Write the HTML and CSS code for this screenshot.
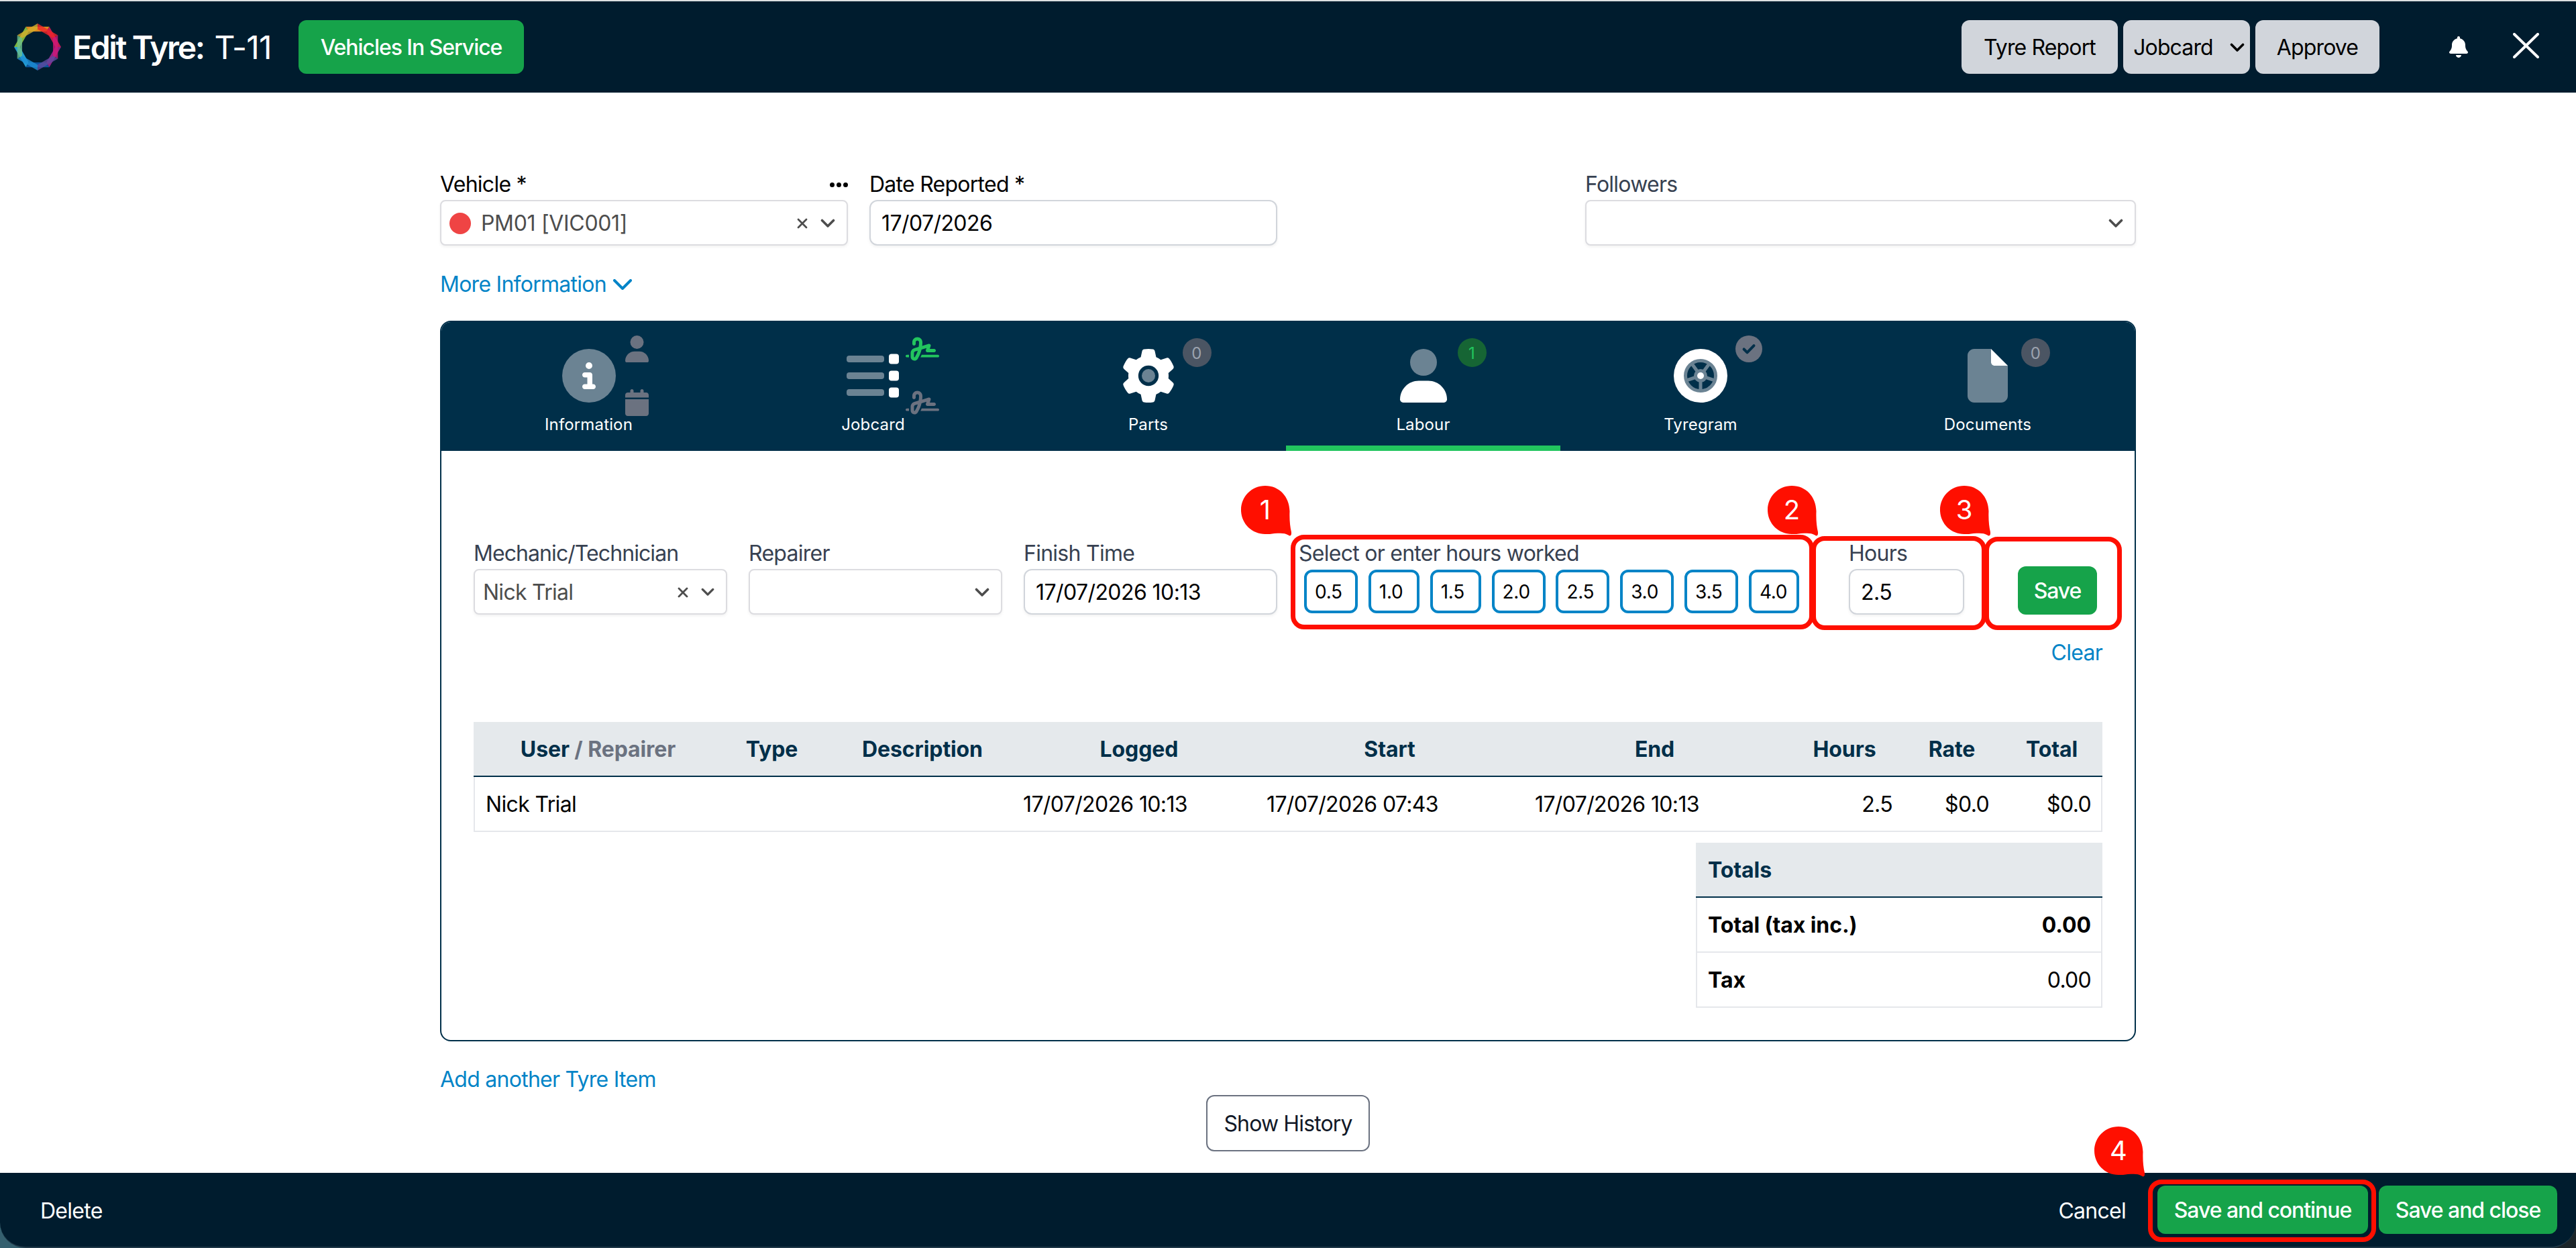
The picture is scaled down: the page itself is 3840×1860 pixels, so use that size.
FILE: index.html
```
<!DOCTYPE html>
<html lang="en">
<head>
    <meta charset="utf-8">
    <title>Edit Tyre: T-11</title>
    <link rel="stylesheet" href="styles.css">
</head>
<body>
    <!-- shared icons -->
    <svg class="defs" width="0" height="0">
        <symbol id="chevron" viewBox="0 0 22 14"><path d="M2.500 2.500l8.500 8.500l8.500-8.500" fill="none" stroke="currentColor" stroke-width="3.600" stroke-linecap="round" stroke-linejoin="round"/></symbol>
        <symbol id="cross" viewBox="0 0 16 16"><path d="M2 2l12 12M14 2L2 14" fill="none" stroke="currentColor" stroke-width="2.800" stroke-linecap="round"/></symbol>
        <symbol id="user" viewBox="0 0 448 512"><path class="head" d="M224 256A128 128 0 1 0 224 0a128 128 0 1 0 0 256z"/><path d="M178.300 304C79.800 304 0 383.800 0 482.300C0 498.700 13.300 512 29.700 512l388.600 0c16.400 0 29.700-13.300 29.700-29.700C448 383.800 368.200 304 269.700 304l-91.400 0z"/></symbol>
        <symbol id="signature" viewBox="0 0 640 512"><path d="M192 128c0-17.700 14.300-32 32-32s32 14.300 32 32l0 7.800c0 27.700-2.400 55.300-7.100 82.500l-84.400 25.300c-40.600 12.200-68.400 49.600-68.400 92l0 71.900c0 40 32.500 72.500 72.500 72.500c26 0 50-13.900 62.900-36.500l13.900-24.300c26.800-47 46.500-97.700 58.400-150.500l94.400-28.300-12.500 37.500c-3.300 9.800-1.600 20.500 4.400 28.800s15.700 13.300 26 13.300l128 0c17.700 0 32-14.300 32-32s-14.300-32-32-32l-83.600 0 18-53.900c3.800-11.300 .9-23.800-7.400-32.400s-20.700-11.800-32.200-8.400L316.400 198.100c2.400-20.700 3.600-41.400 3.600-62.300l0-7.800c0-53-43-96-96-96s-96 43-96 96l0 32c0 17.700 14.300 32 32 32s32-14.300 32-32l0-32zm-9.200 177l49-14.700c-10.400 33.800-24.500 66.400-42.100 97.200l-13.900 24.300c-1.500 2.600-4.300 4.300-7.400 4.300c-4.700 0-8.500-3.800-8.500-8.500l0-71.900c0-14.100 9.300-26.600 22.800-30.700zM24 368c-13.300 0-24 10.700-24 24s10.700 24 24 24l40.300 0c-.2-2.800-.3-5.600-.3-8.500l0-39.500-40 0zm592 48c13.300 0 24-10.700 24-24s-10.700-24-24-24l-310.100 0c-6.700 16.300-14.200 32.300-22.300 48L616 416z"/></symbol>
        <symbol id="bubble" viewBox="0 0 75 75"><path d="M36 0C57 0 72 16 72.500 38C72 50 73 61 75 69C75.500 73 74 76 70.500 73.500C65 70 59 70.500 50 71C45 72 41 72 36 72C16 72 0 56 0 36S16 0 36 0Z"/></symbol>
    </svg>

    <header class="topbar">
        <svg class="logo" viewBox="-35 -35 70 70">
            <g opacity=".9">
                <path d="M-17.500-30.300h35l-4.200 7.300h-26.600z" fill="#f7941d"/>
                <path d="M-17.500-30.300h35l-4.200 7.300h-26.600z" fill="#8cc63f" transform="rotate(-60)"/>
                <path d="M-17.500-30.300h35l-4.200 7.300h-26.600z" fill="#29abe2" transform="rotate(-120)"/>
                <path d="M-17.500-30.300h35l-4.200 7.300h-26.600z" fill="#0d5bab" transform="rotate(180)"/>
                <path d="M-17.500-30.300h35l-4.200 7.300h-26.600z" fill="#a3238e" transform="rotate(120)"/>
                <path d="M-17.500-30.300h35l-4.200 7.300h-26.600z" fill="#d81b54" transform="rotate(60)"/>
            </g>
            <g opacity=".8">
                <path d="M-17.500-30.300h35l-4.200 7.300h-26.600z" fill="#f0262a" transform="rotate(30)"/>
                <path d="M-17.500-30.300h35l-4.200 7.300h-26.600z" fill="#d01878" transform="rotate(90)"/>
                <path d="M-17.500-30.300h35l-4.200 7.300h-26.600z" fill="#5f4ba0" transform="rotate(150)"/>
                <path d="M-17.500-30.300h35l-4.200 7.300h-26.600z" fill="#1e8fd5" transform="rotate(210)"/>
                <path d="M-17.500-30.300h35l-4.200 7.300h-26.600z" fill="#6cc08c" transform="rotate(270)"/>
                <path d="M-17.500-30.300h35l-4.200 7.300h-26.600z" fill="#d4ae2c" transform="rotate(330)"/>
            </g>
        </svg>
        <h1 class="title">Edit Tyre: <span>T-11</span></h1>
        <button class="btn btn-green btn-service">Vehicles In Service</button>
        <div class="topbar-actions">
            <button class="btn btn-grey btn-report">Tyre Report</button>
            <button class="btn btn-grey btn-jobcard">Jobcard <svg width="22" height="14"><use href="#chevron"/></svg></button>
            <button class="btn btn-grey btn-approve">Approve</button>
        </div>
        <svg class="bell" viewBox="0 0 448 512"><path d="M224 0c-17.700 0-32 14.300-32 32l0 19.200C119 66 64 130.600 64 208l0 18.800c0 47-17.300 92.400-48.500 127.600l-7.400 8.300c-8.400 9.400-10.400 22.900-5.300 34.400S19.400 416 32 416l384 0c12.600 0 24-7.400 29.200-18.900s3.100-25-5.300-34.400l-7.400-8.300C401.300 319.200 384 273.900 384 226.800l0-18.800c0-77.400-55-142-128-156.800L256 32c0-17.700-14.300-32-32-32zm45.300 493.300c12-12 18.700-28.300 18.700-45.300l-64 0-64 0c0 17 6.700 33.300 18.700 45.300s28.300 18.700 45.300 18.700s33.300-6.700 45.300-18.700z"/></svg>
        <svg class="close" viewBox="0 0 39 38"><path d="M2 2l35 34M37 2L2 36"/></svg>
    </header>

    <main class="page">
        <div class="vehicle-row">
            <div class="field">
                <label class="dark">Vehicle * <span class="dots"><i></i><i></i><i></i></span></label>
                <div class="select">
                    <span class="status-dot"></span>PM01 [VIC001]
                    <svg class="select-clear" width="16" height="16"><use href="#cross"/></svg>
                    <svg width="22" height="14"><use href="#chevron"/></svg>
                </div>
            </div>
            <div class="field">
                <label class="dark">Date Reported *</label>
                <div class="input">17/07/2026</div>
            </div>
            <div class="field followers">
                <label>Followers</label>
                <div class="select"><svg class="only" width="22" height="14"><use href="#chevron"/></svg></div>
            </div>
        </div>

        <a class="link more-info">More Information <svg width="28" height="16" viewBox="0 0 28 16"><path d="M2 2l12 12l12-12"/></svg></a>

        <section class="card">
            <nav class="tabs">
                <div class="tab">
                    <div class="tab-icon w80">
                        <svg width="80" height="80" viewBox="0 0 512 512"><circle class="muted" cx="256" cy="256" r="256"/><path d="M216 336l24 0 0-64-24 0c-13.300 0-24-10.700-24-24s10.700-24 24-24l48 0c13.300 0 24 10.700 24 24l0 88 8 0c13.300 0 24 10.700 24 24s-10.700 24-24 24l-80 0c-13.300 0-24-10.700-24-24s10.700-24 24-24zm40-208a32 32 0 1 1 0 64 32 32 0 1 1 0-64z"/></svg>
                        <svg class="mini mini-top" width="35" height="40"><use href="#user"/></svg>
                        <svg class="mini mini-bottom" width="35" height="40" viewBox="0 0 448 512"><path d="M96 32l0 32L48 64C21.500 64 0 85.500 0 112l0 48 448 0 0-48c0-26.500-21.500-48-48-48l-48 0 0-32c0-17.700-14.300-32-32-32s-32 14.300-32 32l0 32L160 64l0-32c0-17.700-14.300-32-32-32S96 14.300 96 32zM448 192L0 192 0 464c0 26.500 21.500 48 48 48l352 0c26.500 0 48-21.500 48-48l0-272z"/></svg>
                    </div>
                    Information
                </div>
                <div class="tab">
                    <div class="tab-icon w80">
                        <svg width="80" height="80" viewBox="0 0 80 80">
                            <g class="muted"><rect y="10" width="56" height="10" rx="4"/><rect y="35" width="56" height="10" rx="4"/><rect y="60" width="56" height="10" rx="4"/></g>
                            <rect x="63" y="7.500" width="15" height="15" rx="4"/><rect x="63" y="32.500" width="15" height="15" rx="4"/><rect x="63" y="57.500" width="15" height="15" rx="4"/>
                        </svg>
                        <svg class="mini sign sign-done" width="50" height="40"><use href="#signature"/></svg>
                        <svg class="mini sign mini-bottom" width="50" height="40"><use href="#signature"/></svg>
                    </div>
                    Jobcard
                </div>
                <div class="tab">
                    <div class="tab-icon w80">
                        <svg width="80" height="80" viewBox="0 0 512 512"><path d="M495.900 166.600c3.200 8.700 .5 18.400-6.400 24.600l-43.300 39.400c1.100 8.300 1.700 16.800 1.700 25.400s-.6 17.100-1.700 25.400l43.300 39.400c6.900 6.200 9.600 15.900 6.400 24.600c-4.400 11.900-9.700 23.300-15.800 34.300l-4.700 8.100c-6.600 11-14 21.400-22.100 31.200c-5.900 7.200-15.700 9.600-24.500 6.800l-55.700-17.700c-13.400 10.300-28.200 18.900-44 25.400l-12.500 57.100c-2 9.100-9 16.300-18.200 17.800c-13.800 2.300-28 3.500-42.500 3.500s-28.700-1.200-42.500-3.500c-9.200-1.500-16.200-8.700-18.200-17.800l-12.500-57.100c-15.800-6.500-30.600-15.100-44-25.400L83.100 425.900c-8.800 2.800-18.600 .3-24.500-6.800c-8.100-9.800-15.500-20.200-22.100-31.200l-4.700-8.100c-6.100-11-11.400-22.400-15.800-34.300c-3.200-8.700-.5-18.400 6.400-24.600l43.300-39.400C64.600 273.100 64 264.600 64 256s.6-17.100 1.700-25.400L22.400 191.200c-6.900-6.200-9.600-15.900-6.400-24.600c4.400-11.900 9.700-23.300 15.800-34.300l4.700-8.100c6.600-11 14-21.400 22.100-31.200c5.900-7.200 15.700-9.600 24.500-6.800l55.700 17.700c13.400-10.300 28.200-18.900 44-25.400l12.500-57.100c2-9.100 9-16.300 18.200-17.800C227.300 1.200 241.500 0 256 0s28.700 1.200 42.500 3.500c9.200 1.500 16.200 8.700 18.200 17.800l12.500 57.100c15.800 6.500 30.600 15.100 44 25.400l55.700-17.700c8.800-2.800 18.600-.3 24.500 6.800c8.100 9.800 15.500 20.200 22.100 31.200l4.700 8.100c6.100 11 11.400 22.400 15.800 34.300z"/><circle class="cut" cx="256" cy="256" r="97"/><circle class="muted" cx="256" cy="256" r="64"/></svg>
                        <span class="badge">0</span>
                    </div>
                    Parts
                </div>
                <div class="tab active">
                    <div class="tab-icon w80">
                        <svg class="duo" width="80" height="80"><use href="#user"/></svg>
                        <span class="badge badge-green">1</span>
                    </div>
                    Labour
                </div>
                <div class="tab">
                    <div class="tab-icon w80">
                        <svg width="80" height="80" viewBox="0 0 80 80">
                            <circle cx="40" cy="40" r="40"/>
                            <circle class="cut" cx="40" cy="40" r="23"/>
                            <g class="wheel"><circle cx="40" cy="40" r="22.500"/><path d="M40 40v22M40 40l20.900 6.800M40 40l12.900-17.800M40 40l-12.900-17.800M40 40l-20.900 6.800"/></g>
                            <circle class="muted" cx="40" cy="40" r="10"/><circle cx="40" cy="40" r="5"/>
                        </svg>
                        <svg class="mini check" width="40" height="40" viewBox="0 0 512 512"><circle cx="256" cy="256" r="256"/><path d="M162 262l62 62l128-130"/></svg>
                    </div>
                    Tyregram
                </div>
                <div class="tab">
                    <div class="tab-icon w60">
                        <svg width="60" height="80" viewBox="0 0 384 512"><path class="muted" d="M0 64C0 28.700 28.700 0 64 0L224 0l0 128c0 17.700 14.300 32 32 32l128 0 0 288c0 35.300-28.700 64-64 64L64 512c-35.300 0-64-28.700-64-64L0 64z"/><path d="M384 160L224 0l0 128c0 17.700 14.300 32 32 32l128 0z"/></svg>
                        <span class="badge">0</span>
                    </div>
                    Documents
                </div>
            </nav>

            <div class="panel">
                <div class="labour-form">
                    <div class="field">
                        <label class="mechanic">Mechanic/Technician</label>
                        <div class="select">Nick Trial
                            <svg class="select-clear" width="16" height="16"><use href="#cross"/></svg>
                            <svg width="20" height="13"><use href="#chevron"/></svg>
                        </div>
                    </div>
                    <div class="field">
                        <label>Repairer</label>
                        <div class="select"><svg class="only" width="22" height="14"><use href="#chevron"/></svg></div>
                    </div>
                    <div class="field">
                        <label>Finish Time</label>
                        <div class="input">17/07/2026 10:13</div>
                    </div>
                    <div class="field">
                        <label>Select or enter hours worked</label>
                        <div class="hours">
                            <button>0.5</button>
                            <button>1.0</button>
                            <button>1.5</button>
                            <button>2.0</button>
                            <button>2.5</button>
                            <button>3.0</button>
                            <button>3.5</button>
                            <button>4.0</button>
                        </div>
                    </div>
                    <div class="field">
                        <label>Hours</label>
                        <div class="input">2.5</div>
                    </div>
                    <button class="btn btn-green btn-save">Save</button>
                </div>

                <a class="link clear">Clear</a>

                <table class="labour-table">
                    <colgroup><col class="c-user"><col class="c-type"><col class="c-desc"><col class="c-logged"><col class="c-start"><col class="c-end"><col class="c-hours"><col class="c-rate"><col class="c-total"></colgroup>
                    <thead>
                        <tr><th>User <span>/ Repairer</span></th><th>Type</th><th>Description</th><th>Logged</th><th>Start</th><th>End</th><th>Hours</th><th>Rate</th><th>Total</th></tr>
                    </thead>
                    <tbody>
                        <tr><td>Nick Trial</td><td></td><td></td><td class="logged">17/07/2026 10:13</td><td class="date">17/07/2026 07:43</td><td class="date">17/07/2026 10:13</td><td class="num">2.5</td><td class="num">$0.0</td><td class="num">$0.0</td></tr>
                    </tbody>
                </table>

                <table class="totals-table">
                    <thead><tr><th colspan="2">Totals</th></tr></thead>
                    <tbody>
                        <tr><td><b>Total (tax inc.)</b></td><td class="num"><b>0.00</b></td></tr>
                        <tr><td><b>Tax</b></td><td class="num">0.00</td></tr>
                    </tbody>
                </table>
            </div>
        </section>

        <a class="link add-item">Add another Tyre Item</a>
        <button class="btn btn-history">Show History</button>
    </main>

    <div class="footer-wrap">
        <footer class="footer">
            <span class="delete">Delete</span>
            <span class="cancel">Cancel</span>
            <button class="btn btn-green btn-continue">Save and continue</button>
            <button class="btn btn-green btn-close">Save and close</button>
        </footer>
    </div>

    <!-- numbered steps lying over the form -->
    <div class="frame frame-1"></div>
    <div class="frame frame-2"></div>
    <div class="frame frame-3"></div>
    <div class="frame frame-4"></div>
    <div class="step step-1"><svg><use href="#bubble"/></svg><span>1</span></div>
    <div class="step step-2"><svg><use href="#bubble"/></svg><span>2</span></div>
    <div class="step step-3"><svg><use href="#bubble"/></svg><span>3</span></div>
    <div class="step step-4"><svg><use href="#bubble"/></svg><span>4</span></div>
</body>
</html>
```
FILE: styles.css
```
* {
    box-sizing: border-box;
}

html, body {
    margin: 0;
    height: 100%;
}

body {
    display: flex;
    flex-direction: column;
    position: relative;
    overflow: hidden;
    background-color: #ffffff;
    color: #000000;
    font-family: Inter, "Liberation Sans", sans-serif;
    font-size: 32px;
    line-height: 48px;
    letter-spacing: -0.023em;
}

svg {
    display: block;
    flex: none;
}

.defs {
    position: absolute;
}

/* Buttons */
.btn {
    display: flex;
    align-items: center;
    justify-content: center;
    flex: none;
    height: 72px;
    padding: 2px 0 0;
    border: none;
    border-radius: 12px;
    font: inherit;
    letter-spacing: -0.027em;
    white-space: nowrap;
}

.btn-green {
    background-color: #16a34a;
    color: #ffffff;
    font-weight: 500;
    letter-spacing: -0.033em;
}

.btn-grey {
    height: 80px;
    background-color: #d1d5db;
    color: #000000;
}

/* Top bar */
.topbar {
    display: flex;
    align-items: center;
    flex: none;
    height: 138px;
    padding: 0 55px 0 21px;
    border-top: 2px solid #dcdfe1;
    background-color: #001c2e;
    color: #ffffff;
}

.logo {
    width: 70px;
    height: 70px;
}

.title {
    width: 354px;
    margin: 0;
    padding: 2px 0 0 17px;
    font-size: 48px;
    font-weight: 600;
    letter-spacing: -0.049em;
    white-space: nowrap;
}

.title span {
    margin-left: 6px;
    font-weight: 400;
    letter-spacing: -0.018em;
}

.btn-service {
    width: 336px;
    height: 80px;
}

.topbar-actions {
    display: flex;
    gap: 8px;
    margin-left: auto;
}

.btn-report {
    width: 233px;
}

.btn-jobcard {
    width: 189px;
    gap: 25px;
    padding-left: 7px;
}

.btn-jobcard path {
    stroke-width: 3;
}

.btn-approve {
    width: 185px;
}

.bell {
    width: 28px;
    height: 32px;
    margin-left: 104px;
    fill: #ffffff;
}

.close {
    width: 39px;
    height: 38px;
    margin: -5px 0 0 67px;
    fill: none;
    stroke: #ffffff;
    stroke-width: 4;
    stroke-linecap: round;
}

/* Page */
.page {
    display: flex;
    flex-direction: column;
    align-items: flex-start;
    width: 2528px;
    margin: 0 auto;
    padding-top: 112px;
}

.vehicle-row {
    display: grid;
    grid-template-columns: 608px 608px 820px;
    column-gap: 32px;
    width: 100%;
}

.followers {
    grid-column: 3;
    margin-left: 427px;
    width: 821px;
}

.field label {
    display: flex;
    align-items: center;
    justify-content: space-between;
    height: 48px;
    padding-top: 2px;
    color: #374151;
    white-space: nowrap;
}

.field label.dark {
    color: #000000;
}

.field .mechanic {
    letter-spacing: -0.029em;
}

.dots {
    display: flex;
    gap: 3px;
}

.dots i {
    width: 7px;
    height: 7px;
    border-radius: 50%;
    background-color: #000000;
}

.select, .input {
    display: flex;
    align-items: center;
    height: 68px;
    border: 2px solid #dcdce0;
    border-radius: 8px;
    background-color: #ffffff;
    box-shadow: 0 2px 4px rgba(0, 0, 0, 0.06);
    white-space: nowrap;
}

.select {
    padding: 1px 17px 0 12px;
    color: #4d4d4d;
}

.input {
    padding: 2px 0 0 16px;
    border-color: #d1d5db;
    border-radius: 12px;
    letter-spacing: -0.018em;
}

.select-clear {
    margin-left: auto;
    margin-right: 19px;
}

.only {
    margin-left: auto;
}

.status-dot {
    width: 32px;
    height: 32px;
    margin-right: 15px;
    border-radius: 50%;
    background-color: #ef4444;
}

.vehicle-row .select {
    letter-spacing: -0.01em;
}

.link {
    color: #0284c7;
}

.more-info {
    display: flex;
    align-items: center;
    gap: 10px;
    margin: 34px 0 30px;
}

.more-info path {
    fill: none;
    stroke: #0284c7;
    stroke-width: 4;
    stroke-linecap: round;
    stroke-linejoin: round;
}

/* Card with the tabs */
.card {
    width: 100%;
    border: 2px solid #002f49;
    border-radius: 16px;
    overflow: hidden;
}

.tabs {
    display: grid;
    grid-template-columns: 439px 409px 411px 409px 418px 438px;
    height: 192px;
    background-color: #002f49;
    color: #ffffff;
    font-size: 24px;
    line-height: 32px;
    letter-spacing: 0.006em;
}

.tab {
    display: flex;
    flex-direction: column;
    align-items: center;
    gap: 17px;
    padding-top: 40px;
}

.active {
    box-shadow: inset 0 -8px #22c55e;
}

.tab-icon {
    position: relative;
    height: 80px;
    fill: #ffffff;
}

.w80 {
    width: 80px;
}

.w60 {
    width: 60px;
}

.muted {
    fill: #6b8393;
}

.duo {
    --head: #6b8393;
}

.head {
    fill: var(--head);
}

.cut {
    fill: #002f49;
}

.wheel {
    fill: none;
    stroke: #6b8393;
    stroke-width: 5;
}

.mini {
    position: absolute;
    top: -20px;
    left: 94px;
    fill: #6b7280;
}

.mini-bottom {
    top: 60px;
}

.sign {
    left: 88px;
}

.sign-done {
    fill: #22c55e;
}

.check {
    left: 92px;
}

.check path {
    fill: none;
    stroke: #002f49;
    stroke-width: 52;
    stroke-linecap: round;
    stroke-linejoin: round;
}

.badge {
    position: absolute;
    top: -16px;
    right: -54px;
    width: 43px;
    height: 43px;
    border-radius: 50%;
    background-color: #4b5563;
    color: #9ca3af;
    line-height: 45px;
    text-align: center;
}

.w60 .badge {
    right: -63px;
}

.badge-green {
    background-color: #166534;
    color: #22c55e;
}

.panel {
    display: flex;
    flex-direction: column;
    padding: 128px 48px 48px;
}

.labour-form {
    display: grid;
    grid-template-columns: 378px 378px 378px 788px 172px 174px;
    column-gap: 32px;
}

.hours {
    display: flex;
    justify-content: space-between;
    width: 738px;
    margin: 1px 0 0 8px;
}

.hours button {
    width: 80px;
    height: 65px;
    padding: 1px 0 0 12px;
    border: 4px solid #0284c7;
    border-radius: 12px;
    background-color: #ffffff;
    color: #000000;
    font: 28px Inter, "Liberation Sans", sans-serif;
    letter-spacing: -0.01em;
    text-align: left;
}

.hours button:nth-child(2), .hours button:nth-child(3) {
    width: 76px;
}

.hours button:last-child {
    width: 75px;
}

.btn-save {
    align-self: end;
    justify-self: end;
    width: 118px;
    margin-right: 8px;
}

.clear {
    align-self: flex-end;
    margin: 33px 0 79px;
}

/* Tables */
table {
    border-spacing: 0;
    table-layout: fixed;
}

th, td {
    height: 82px;
    padding: 2px 16px 0;
    border-bottom: 2px solid #e5e7eb;
    white-space: nowrap;
}

th {
    padding: 2px 0 0 3px;
    border-bottom-color: #002f49;
    background-color: #e5e9ec;
    color: #002f49;
    font-weight: 700;
    letter-spacing: -0.003em;
}

th span {
    color: #6b7280;
}

td:first-child {
    border-left: 2px solid #e5e7eb;
}

td:last-child {
    border-right: 2px solid #e5e7eb;
}

b {
    letter-spacing: -0.003em;
}

.num {
    padding-right: 15px;
    text-align: right;
}

.labour-table {
    width: 2428px;
    letter-spacing: -0.02em;
}

.c-user { width: 368px; }
.c-type { width: 150px; }
.c-desc { width: 299px; }
.c-logged { width: 347px; }
.c-start { width: 400px; }
.c-end { width: 390px; }
.c-hours { width: 176px; }
.c-rate { width: 144px; }
.c-total { width: 154px; }

.labour-table .logged {
    padding-left: 2px;
}

.labour-table .date {
    padding-left: 18px;
}

.totals-table {
    align-self: flex-end;
    width: 606px;
    margin-top: 16px;
}

.totals-table th {
    padding-left: 18px;
    text-align: left;
}

.add-item {
    margin: 33px 0 -1px;
}

.btn-history {
    align-self: center;
    width: 244px;
    height: 84px;
    border: 2px solid #6b7280;
    background-color: #ffffff;
    color: #111827;
}

/* Footer */
.footer-wrap {
    margin-top: auto;
    background: linear-gradient(90deg, #35606f, #1b2428);
}

.footer {
    display: flex;
    align-items: center;
    height: 112px;
    padding: 0 28px 0 60px;
    border-bottom: 2px solid #1f3848;
    border-radius: 0 0 38px 38px;
    background-color: #001c2e;
    color: #ffffff;
}

.delete, .cancel {
    padding-top: 3px;
}

.cancel {
    margin-left: auto;
    margin-right: 47px;
}

.btn-continue {
    width: 314px;
    margin-right: 16px;
}

.btn-close {
    width: 266px;
}

/* Step markers */
.frame {
    position: absolute;
    border: 7px solid #ff0f00;
    border-radius: 20px;
}

.frame-1 { left: 1924px; top: 797px; width: 780px; height: 141px; }
.frame-2 { left: 2700px; top: 799px; width: 261px; height: 140px; }
.frame-3 { left: 2958px; top: 800px; width: 205px; height: 139px; }
.frame-4 { left: 3202px; top: 1758px; width: 340px; height: 93px; }

.step {
    position: absolute;
    width: 75px;
    height: 75px;
    color: #ffffff;
    font-size: 40px;
    line-height: 72px;
    letter-spacing: 0;
}

.step svg {
    position: absolute;
    width: 75px;
    height: 75px;
    fill: #ff0f00;
}

.step span {
    position: relative;
    display: block;
    width: 72px;
    text-align: center;
}

.step-1 { left: 1850px; top: 724px; }
.step-2 { left: 2635px; top: 724px; }
.step-3 { left: 2892px; top: 724px; }
.step-4 { left: 3122px; top: 1679px; }
```
